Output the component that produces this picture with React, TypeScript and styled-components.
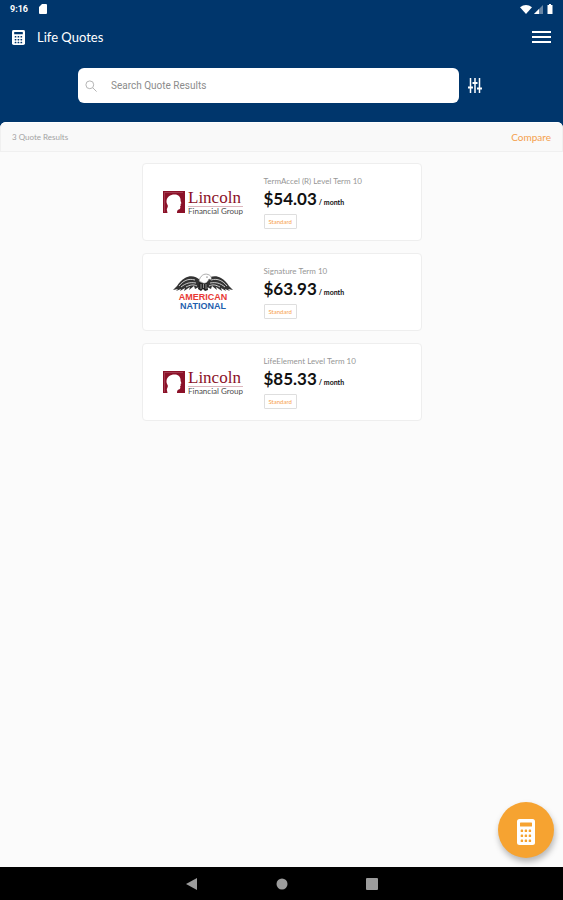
import React from "react";
import styled, { createGlobalStyle } from "styled-components";

const GlobalStyle = createGlobalStyle`
  * { box-sizing: border-box; }
  body {
    margin: 0;
    background: #fbfbfb;
    font-family: Lato, "Noto Sans", sans-serif;
  }
  button { font: inherit; padding: 0; border: 0; background: none; cursor: pointer; }
  svg { display: block; flex: none; }
`;

const Screen = styled.div`
  min-height: 100vh;
  display: flex;
  flex-direction: column;
  background: #00366c;
`;

const StatusBar = styled.div`
  height: 18px;
  padding: 0 10px;
  display: flex;
  align-items: center;
  justify-content: space-between;
  color: #fff;
  font: 700 9px/12px Roboto, sans-serif;
`;

const Cluster = styled.div<{ $gap: number }>`
  display: flex;
  align-items: center;
  gap: ${(p) => p.$gap}px;
`;

const AppBar = styled.header`
  height: 38px;
  padding: 0 12px;
  display: flex;
  align-items: center;
  justify-content: space-between;
  color: #fff;
`;

const Title = styled.h1`
  margin: 0;
  font-size: 13px;
  line-height: 16px;
  font-weight: 400;
`;

const IconButton = styled.button`
  display: flex;
  color: #fff;
`;

const SearchRow = styled.div`
  display: flex;
  align-items: center;
  gap: 9px;
  padding: 12px 81px 19px 78px;
`;

const SearchBox = styled.label`
  flex: 1;
  min-width: 0;
  height: 35px;
  display: flex;
  align-items: center;
  gap: 14px;
  padding: 0 7px;
  border-radius: 6px;
  background: #fff;
`;

const SearchInput = styled.input`
  flex: 1;
  min-width: 0;
  padding: 0;
  border: 0;
  outline: 0;
  background: none;
  color: #555;
  font: 400 10px/14px Roboto, sans-serif;
  &::placeholder { color: #8c8c8c; opacity: 1; }
`;

const Sheet = styled.main`
  flex: 1;
  border-radius: 6px 6px 0 0;
  background: #fbfbfb;
`;

const ResultsBar = styled.div`
  height: 30px;
  padding: 0 11px;
  display: flex;
  align-items: center;
  justify-content: space-between;
  border: 1px solid #f0f0f0;
  border-top-color: #fff;
  border-radius: 6px 6px 0 0;
  background: #f9f9f9;
`;

const Count = styled.span`
  color: #a3a3a3;
  font-size: 8px;
  line-height: 12px;
`;

const Compare = styled.button`
  color: #f5a04c;
  && { font-size: 10px; line-height: 14px; }
`;

const CardList = styled.ul`
  width: 280px;
  max-width: 100%;
  margin: 0 auto;
  padding: 11px 0;
  display: flex;
  flex-direction: column;
  gap: 12px;
  list-style: none;
`;

const Card = styled.li`
  height: 78px;
  display: grid;
  grid-template-columns: 121px 1fr;
  align-items: center;
  border: 1px solid #eeeeee;
  border-radius: 4px;
  background: #fff;
`;

const LogoCell = styled.div`
  display: flex;
  justify-content: center;
`;

const LincolnMark = styled.div`
  display: flex;
  align-items: center;
  gap: 3px;
`;

const LincolnWords = styled.div`
  display: flex;
  flex-direction: column;
`;

const LincolnName = styled.span`
  border-bottom: 1px solid #dcb5bd;
  color: #8b1128;
  font: 400 17px/17px "Liberation Serif", serif;
`;

const LincolnGroup = styled.span`
  color: #4c4c4c;
  font: 400 8px/9px Lato, sans-serif;
`;

const NationalMark = styled.div`
  display: flex;
  flex-direction: column;
  align-items: center;
`;

const NationalWord = styled.span<{ $color: string }>`
  color: ${(p) => p.$color};
  font: 700 9px/9px "Liberation Sans", sans-serif;
`;

const Details = styled.div`
  display: flex;
  flex-direction: column;
  align-items: flex-start;
`;

const Plan = styled.span`
  color: #969696;
  font-size: 8px;
  line-height: 12px;
`;

const PriceLine = styled.div`
  display: flex;
  align-items: baseline;
  gap: 2px;
  color: #111;
  line-height: 24px;
`;

const Price = styled.strong`
  font-size: 17px;
  font-weight: 700;
`;

const Period = styled.span`
  font-size: 7px;
  font-weight: 700;
`;

const Tag = styled.span`
  padding: 0 4px;
  border: 1px solid #dedede;
  border-radius: 1px;
  color: #f7a14d;
  font-size: 6px;
  line-height: 13px;
`;

const BottomArea = styled.footer`
  position: sticky;
  bottom: 0;
`;

const Fab = styled.button`
  position: absolute;
  right: 9px;
  bottom: 42px;
  width: 56px;
  height: 56px;
  display: flex;
  align-items: center;
  justify-content: center;
  && { padding-top: 4px; border-radius: 50%; background: #f6a331; }
  box-shadow: 1px 4px 6px rgba(0, 0, 0, 0.28);
`;

const NavBar = styled.nav`
  height: 33px;
  display: flex;
  align-items: center;
  justify-content: center;
  gap: 78px;
  background: #000;
`;

function Calculator({ width, height, ink }: { width: number; height: number; ink: string }) {
  const cells = [11, 16, 21].flatMap((y) => [4, 8, 12].map((x) => ({ x, y })));
  return (
    <svg width={width} height={height} viewBox="0 0 18 26" preserveAspectRatio="none" aria-hidden="true">
      <rect width="18" height="26" rx="2.5" fill="#fff" />
      <rect x="3" y="3.5" width="12" height="4" rx="0.6" fill={ink} />
      {cells.map((c) => (
        <rect key={`${c.x}-${c.y}`} x={c.x - 0.3} y={c.y - 0.5} width="2.4" height="2.6" rx="0.6" fill={ink} />
      ))}
    </svg>
  );
}

function LincolnLogo() {
  return (
    <LincolnMark>
      <svg width="22" height="24" viewBox="0 0 22 24" aria-hidden="true">
        <path
          fill="#8b1128"
          d="M0 1h22v22h-8c0-2 .3-3 1.700-3.500 1.200-.3 1.700-1 1.600-2.200l-.2-1.300.8-.6-.4-1.300.9-.8-.8-2.300c.2-4-2-6.500-6-6.500C7 4.500 4 7 3.500 11c-.2 2 .8 3.200 1.300 4.600.4 1.600-.8 2.600-1 4L4.500 23H0z"
        />
        <path d="M1.500 22V2.500H20" stroke="#c37a86" strokeWidth="0.4" fill="none" />
      </svg>
      <LincolnWords>
        <LincolnName>Lincoln</LincolnName>
        <LincolnGroup>Financial Group</LincolnGroup>
      </LincolnWords>
    </LincolnMark>
  );
}

function EagleWing() {
  return (
    <>
      <path
        fill="#333"
        d="M27 7C23 3 17 2 12 5 8 7 6 10 4 13l-4 4 5-1-2 2 5-2-1 2 5-3-1 3 6-4-1 3 5-4 1 3 4-2z"
      />
      <path
        d="M6 13c4-5 9-8 16-6M8 14c5-4 9-5 15-4M13 14c4-2 7-3 11-1"
        fill="none"
        stroke="#ddd"
        strokeWidth="0.9"
      />
    </>
  );
}

function NationalLogo() {
  return (
    <NationalMark>
      <svg width="60" height="20" viewBox="0 0 60 20" aria-hidden="true">
        <EagleWing />
        <g transform="translate(60 0) scale(-1 1)">
          <EagleWing />
        </g>
        <path fill="#222" d="M26 9l8 1 1 7-3 1-2-2-2 2-3-2z" />
        <path d="M28 11v5M30.500 11v4M33 11v5" stroke="#bbb" strokeWidth="0.7" />
        <path fill="#fff" stroke="#777" strokeWidth="0.6" d="M26 8c1-5 5-8 9-6.500 3 1 4 3 3 5.500l-2-1c-1 3-4 5-6 4z" />
        <circle cx="34" cy="4" r="0.6" fill="#222" />
      </svg>
      <NationalWord $color="#e83a35">AMERICAN</NationalWord>
      <NationalWord $color="#1f5fae">NATIONAL</NationalWord>
    </NationalMark>
  );
}

const quotes = [
  { plan: "TermAccel (R) Level Term 10", price: "$54.03", Logo: LincolnLogo },
  { plan: "Signature Term 10", price: "$63.93", Logo: NationalLogo },
  { plan: "LifeElement Level Term 10", price: "$85.33", Logo: LincolnLogo },
];

export default function App() {
  return (
    <>
      <GlobalStyle />
      <Screen>
        <StatusBar>
          <Cluster $gap={11}>
            <span>9:16</span>
            <svg width="8" height="10" viewBox="0 0 8 10" aria-hidden="true">
              <path d="M3 0h4a1 1 0 011 1v8a1 1 0 01-1 1H1a1 1 0 01-1-1V3z" fill="#fff" />
            </svg>
          </Cluster>
          <Cluster $gap={2}>
            <svg width="12" height="9" viewBox="0 0 12 9" aria-hidden="true">
              <path d="M0 2.200Q6-2 12 2.200L6 9z" fill="#fff" />
            </svg>
            <svg width="9" height="9" viewBox="0 0 9 9" aria-hidden="true">
              <path d="M9 0v9H0z" fill="#6785a5" />
              <path d="M5 4v5H0z" fill="#fff" />
            </svg>
            <svg width="8" height="10" viewBox="0 0 8 10" aria-hidden="true">
              <path d="M3 1h1V0h2v1h1.500v9h-5V1z" fill="#fff" />
            </svg>
          </Cluster>
        </StatusBar>
        <AppBar>
          <Cluster $gap={12}>
            <Calculator width={13} height={15} ink="#00366c" />
            <Title>Life Quotes</Title>
          </Cluster>
          <IconButton aria-label="Menu">
            <svg width="19" height="14" viewBox="0 0 19 14" aria-hidden="true">
              <path d="M0 2h19M0 7h19M0 12h19" stroke="currentColor" strokeWidth="2" />
            </svg>
          </IconButton>
        </AppBar>
        <SearchRow>
          <SearchBox>
            <svg width="12" height="12" viewBox="0 0 12 12" fill="none" stroke="#b5b5b5" aria-hidden="true">
              <circle cx="4.800" cy="4.800" r="3.900" />
              <path d="M7.600 7.600l4 4" />
            </svg>
            <SearchInput type="search" placeholder="Search Quote Results" aria-label="Search Quote Results" />
          </SearchBox>
          <IconButton aria-label="Filters">
            <svg width="14" height="15" viewBox="0 0 14 15" fill="none" stroke="#fff" aria-hidden="true">
              <path d="M2.500 0v15M7 0v15M11.500 0v15" strokeWidth="1.500" />
              <path d="M0 9.500h5M4.500 5h5M9 10.500h5" strokeWidth="2" />
            </svg>
          </IconButton>
        </SearchRow>
        <Sheet>
          <ResultsBar>
            <Count>3 Quote Results</Count>
            <Compare>Compare</Compare>
          </ResultsBar>
          <CardList>
            {quotes.map(({ plan, price, Logo }) => (
              <Card key={plan}>
                <LogoCell>
                  <Logo />
                </LogoCell>
                <Details>
                  <Plan>{plan}</Plan>
                  <PriceLine>
                    <Price>{price}</Price>
                    <Period>/ month</Period>
                  </PriceLine>
                  <Tag>Standard</Tag>
                </Details>
              </Card>
            ))}
          </CardList>
        </Sheet>
        <BottomArea>
          <Fab aria-label="New quote">
            <Calculator width={18} height={26} ink="#f6a331" />
          </Fab>
          <NavBar>
            <IconButton aria-label="Back">
              <svg width="12" height="12" viewBox="0 0 12 12" aria-hidden="true">
                <path d="M11 0v12L0 6z" fill="#9c9c9c" />
              </svg>
            </IconButton>
            <IconButton aria-label="Home">
              <svg width="12" height="12" viewBox="0 0 12 12" aria-hidden="true">
                <circle cx="6" cy="6" r="5.500" fill="#9c9c9c" />
              </svg>
            </IconButton>
            <IconButton aria-label="Recent apps">
              <svg width="12" height="12" viewBox="0 0 12 12" aria-hidden="true">
                <rect width="12" height="12" rx="1" fill="#9c9c9c" />
              </svg>
            </IconButton>
          </NavBar>
        </BottomArea>
      </Screen>
    </>
  );
}
